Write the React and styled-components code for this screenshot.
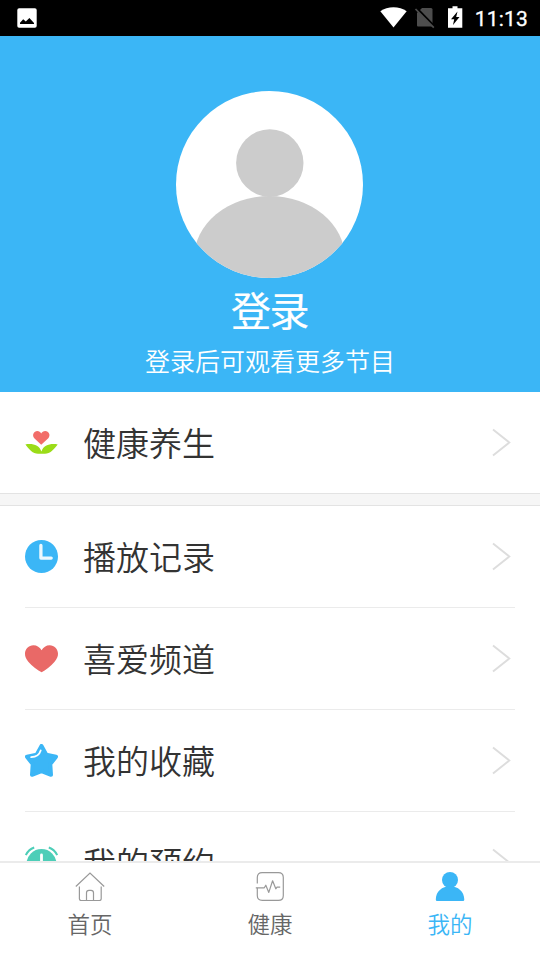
import React, { Component } from "react";
import styled, { createGlobalStyle } from "styled-components";

const GlobalStyle = createGlobalStyle`
  * {
    box-sizing: border-box;
  }

  body {
    margin: 0;
    background-color: #fff;
    font-family: "Noto Sans CJK SC", sans-serif;
    font-weight: 350;
  }
`;

const Screen = styled.div`
  width: 540px;
  height: 960px;
  display: flex;
  flex-direction: column;
  overflow: hidden;
  background-color: #fff;
`;

const StatusBar = styled.div`
  flex: none;
  height: 36px;
  display: flex;
  align-items: center;
  justify-content: space-between;
  padding: 0 12px 0 17px;
  background-color: #000;

  svg {
    display: block;
  }
`;

const StatusIcons = styled.div`
  display: flex;
  align-items: center;
`;

const Clock = styled.span`
  margin-left: 7px;
  color: #fff;
  font-family: Roboto, sans-serif;
  font-size: 21px;
  font-weight: 400;
  line-height: 36px;
  letter-spacing: 0.2px;
  padding-top: 1px;
  -webkit-text-stroke: 0.3px #fff;
`;

const Profile = styled.div`
  flex: none;
  height: 356px;
  display: flex;
  flex-direction: column;
  align-items: center;
  padding-top: 55px;
  background-color: #3bb6f6;
  color: #fff;

  svg {
    display: block;
    flex: none;
    margin-right: 1px;
  }

  h1 {
    margin: 2px 1px 0 0;
    font-size: 40px;
    font-weight: 400;
    line-height: 58px;
    letter-spacing: -1.5px;
    -webkit-text-stroke: 0.2px #fff;
  }

  p {
    margin: 4px 0 0;
    font-size: 25px;
    line-height: 36px;
  }
`;

const Menu = styled.div`
  flex: 1;
  min-height: 0;
  overflow: hidden;
`;

const Divider = styled.div`
  height: 13px;
  border-top: 1px solid #e3e3e3;
  border-bottom: 1px solid #e3e3e3;
  background-color: #f6f6f6;
`;

const Row = styled.div`
  height: ${props => (props.$line ? 102 : 101)}px;
  margin: 0 25px;
  display: flex;
  align-items: center;
  border-bottom: ${props => (props.$line ? "1px solid #ebebeb" : "0")};

  svg {
    display: block;
    flex: none;
  }

  span {
    flex: 1;
    margin-left: 25px;
    padding-bottom: 2px;
    color: #333;
    font-size: 33px;
    line-height: 48px;
  }
`;

const TabBar = styled.div`
  flex: none;
  height: 99px;
  display: flex;
  border-top: 2px solid #ebebeb;
  background-color: #fff;
`;

const Tab = styled.div`
  flex: 1;
  display: flex;
  flex-direction: column;
  align-items: center;
  padding-top: 8px;
  color: ${props => (props.$active ? "#3bb6f6" : "#666")};
  font-size: 22.5px;
  line-height: 34px;

  svg {
    display: block;
    flex: none;
    margin-bottom: 5px;
  }
`;

const Avatar = () => (
  <svg width="187" height="187" viewBox="0 0 187 187">
    <defs>
      <clipPath id="face">
        <circle cx="93.5" cy="93.5" r="93.5" />
      </clipPath>
    </defs>
    <circle cx="93.5" cy="93.5" r="93.5" fill="#fff" />
    <g clipPath="url(#face)" fill="#ccc">
      <circle cx="93.8" cy="72" r="33.7" />
      <ellipse cx="93.5" cy="167.5" rx="75.5" ry="62.5" />
    </g>
  </svg>
);

const FlowerIcon = () => (
  <svg width="33" height="33" viewBox="0 0 33 33">
    <path
      d="M16.2 18.8 9.3 12.2C6.6 9 9 5 12.2 5c1.9 0 3.3 1 4 2.4C17 6 18.4 5 20.3 5c3.4 0 5.7 4 3 7.2Z"
      fill="#f26d69"
    />
    <path
      d="M.4 18.4C8 17.2 14.3 19.2 16.4 25.5 18.5 19.2 25 17.2 32.7 18.4 29 23.3 25 27.7 20 27.7h-7C8 27.7 4 23.3.4 18.4Z"
      fill="#9bdc18"
    />
  </svg>
);

const HistoryIcon = () => (
  <svg width="33" height="33" viewBox="0 0 33 33">
    <circle cx="16.5" cy="16.5" r="16.5" fill="#3bb6f6" />
    <path
      d="M15.9 5.5v12.6h10.3"
      fill="none"
      stroke="#fff"
      strokeOpacity="0.9"
      strokeWidth="3.3"
      strokeLinecap="round"
      strokeLinejoin="round"
    />
  </svg>
);

const HeartIcon = () => (
  <svg width="33" height="33" viewBox="0 0 33 33">
    <path
      d="M16.6 30.2C13 28.2 7 24.3 3.3 19.7.8 16.7 0 14.5 0 11.8 0 7 3.7 3.2 8.4 3.2c3.5 0 6.6 2 8.2 5 1.6-3 4.6-5 8.1-5C29.3 3.2 33 7 33 11.8c0 2.7-.9 4.9-3.4 7.9-3.7 4.6-9.4 8.5-13 10.5Z"
      fill="#e96967"
    />
  </svg>
);

const StarIcon = () => (
  <svg width="33" height="33" viewBox="0 0 33 33">
    <path
      d="M16.5 2 21.3 10.7 31 12.7 25.3 20.1 26 30.8 16.5 27.2 7 30.8 7.7 20.1 2 12.7 11.7 10.7Z"
      fill="#3bb6f6"
      stroke="#3bb6f6"
      strokeWidth="4"
      strokeLinejoin="round"
    />
    <path
      d="M15.7 6.4c-1.2 4-3.2 6.4-9.5 6.8"
      fill="none"
      stroke="#fff"
      strokeWidth="1.8"
      strokeLinecap="round"
    />
  </svg>
);

const AlarmIcon = () => (
  <svg width="33" height="33" viewBox="0 0 33 33">
    <circle cx="16.5" cy="18" r="15" fill="#4dceb8" />
    <path
      d="M.8 9.2C2.5 5.5 5 3 9.2 1.5M32.2 9.2C30.5 5.5 28 3 23.8 1.5"
      fill="none"
      stroke="#4dceb8"
      strokeWidth="2"
    />
    <path
      d="M16.5 9v10.500h7"
      fill="none"
      stroke="#fff"
      strokeWidth="2.8"
      strokeLinecap="round"
    />
  </svg>
);

const Chevron = () => (
  <svg width="24" height="30" viewBox="0 0 24 30">
    <path d="M2 1.5 18.3 14.5 2 27.5" fill="none" stroke="#ddd" strokeWidth="1.9" />
  </svg>
);

const HomeIcon = () => (
  <svg width="30" height="30" viewBox="0 0 30 30">
    <g fill="none" stroke="#999" strokeWidth="1.2">
      <path d="M.8 15.5 15 2l14.2 13.5" />
      <path d="M4.4 15.5v12.3q0 1.7 1.7 1.7h18.4q1.7 0 1.7-1.7V15.5" />
      <path d="M11.5 29.5v-7.7q0-2.5 2.5-2.5h2q2.5 0 2.5 2.5v7.7" />
    </g>
  </svg>
);

const HealthIcon = () => (
  <svg width="30" height="30" viewBox="0 0 30 30">
    <g fill="none" stroke="#999" strokeWidth="1.2" strokeLinejoin="round">
      <path d="M2.3 12.5V6.5Q2.3 1.6 7.2 1.6h16.2q4.9 0 4.9 4.9v18q0 4.9-4.9 4.9H7.2q-4.9 0-4.9-4.9V16.8" />
      <path d="M.8 16.8h8.5l1.5-2.6 3 7.2 3.8-11.6 3.2 8 1.2-1.6h3.2" />
    </g>
  </svg>
);

const MineIcon = () => (
  <svg width="30" height="30" viewBox="0 0 30 30">
    <g fill="#3bb6f6">
      <circle cx="15" cy="9" r="8" />
      <path d="M.8 28.5C.8 20.5 7 15.2 15 15.2s14.3 5.3 14.3 13.3q0 1.6-1.6 1.6H2.4q-1.6 0-1.6-1.6Z" />
    </g>
  </svg>
);

const items = [
  { label: "播放记录", icon: <HistoryIcon /> },
  { label: "喜爱频道", icon: <HeartIcon /> },
  { label: "我的收藏", icon: <StarIcon /> },
  { label: "我的预约", icon: <AlarmIcon /> }
];

class App extends Component {
  render() {
    return (
      <Screen>
        <GlobalStyle />
        <StatusBar>
          <svg width="20" height="20" viewBox="0 0 20 20">
            <rect x="0.3" y="0.3" width="19.4" height="19.4" rx="1.8" fill="#fff" />
            <path d="M3 16v-1.2l3.2-3.6 2.6 2.4L12.4 10 17 15v1Z" fill="#000" />
          </svg>
          <StatusIcons>
            <svg width="88" height="26" viewBox="0 0 88 26">
              <path d="M.3 6.3C7.5.8 19.5.8 26.7 6.3L13.5 22.5Z" fill="#fff" />
              <path
                d="M42 3h9q1.5 0 1.5 1.5v17H38q-1 0-1-1V8Z"
                fill="#4d4d4d"
              />
              <path d="m36.7 3.3 18 18.5" stroke="#000" strokeWidth="2.5" />
              <path d="m35.5 4 18.3 18.7" stroke="#4d4d4d" strokeWidth="1.7" />
              <path d="M72.5 1.3h5v2h4.8v19.5H68V3.3h4.5Z" fill="#fff" />
              <path d="M77.5 6.5 71 14.2h3.2L73 20l6.5-8h-3.3Z" fill="#000" />
            </svg>
            <Clock>11:13</Clock>
          </StatusIcons>
        </StatusBar>
        <Profile>
          <Avatar />
          <h1>登录</h1>
          <p>登录后可观看更多节目</p>
        </Profile>
        <Menu>
          <Row>
            <FlowerIcon />
            <span>健康养生</span>
            <Chevron />
          </Row>
          <Divider />
          {items.map(item => (
            <Row key={item.label} $line>
              {item.icon}
              <span>{item.label}</span>
              <Chevron />
            </Row>
          ))}
        </Menu>
        <TabBar>
          <Tab>
            <HomeIcon />
            首页
          </Tab>
          <Tab>
            <HealthIcon />
            健康
          </Tab>
          <Tab $active>
            <MineIcon />
            我的
          </Tab>
        </TabBar>
      </Screen>
    );
  }
}

export default App;
